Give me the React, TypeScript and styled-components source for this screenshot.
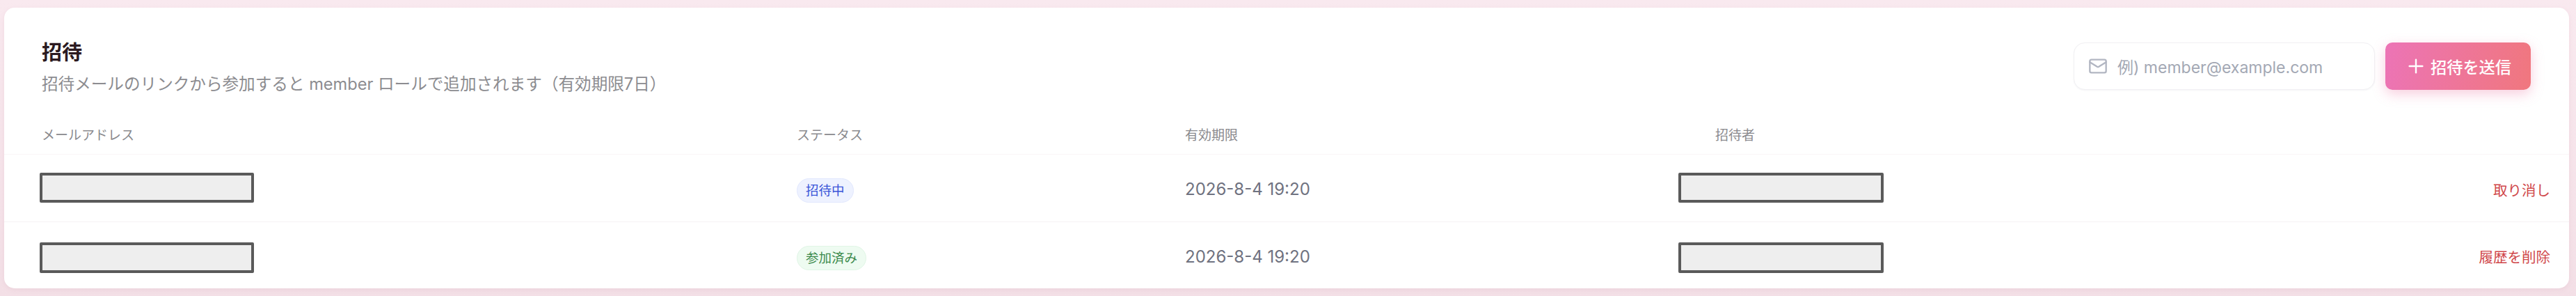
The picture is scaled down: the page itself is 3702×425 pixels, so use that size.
import styled, { createGlobalStyle } from 'styled-components';
import { Mail, Plus } from 'lucide-react';

const GlobalStyle = createGlobalStyle`
    html, body {
        margin: 0;
        padding: 0;
    }
    body {
        width: 3702px;
        height: 425px;
        overflow: hidden;
        background: linear-gradient(180deg, #f9e9ef 0%, #f3dfe6 100%);
        font-family: Inter, "Noto Sans CJK JP", sans-serif;
    }
`;

const Page = styled.div`
    display: flex;
    box-sizing: border-box;
    width: 3702px;
    height: 425px;
    padding: 11px 10px 11px 6px;
`;

const Card = styled.section`
    flex: 1;
    display: flex;
    flex-direction: column;
    background: #ffffff;
    border-radius: 15px;
    box-shadow: 0 2px 6px rgba(190, 120, 150, 0.12);
`;

const Header = styled.header`
    display: flex;
    justify-content: space-between;
    align-items: flex-start;
    height: 152px;
    padding: 49px 55px 0 54px;
    box-sizing: border-box;
`;

const Title = styled.h2`
    margin: 0 0 13px;
    font-size: 29px;
    line-height: 32px;
    font-weight: 700;
    color: #2b1a20;
`;

const Subtitle = styled.p`
    margin: 0;
    font-size: 23.6px;
    line-height: 32px;
    color: #8c8c90;
`;

const InviteForm = styled.div`
    display: flex;
    gap: 15px;
    margin-top: 1px;
`;

const EmailField = styled.div`
    display: flex;
    align-items: center;
    gap: 14px;
    box-sizing: border-box;
    width: 433px;
    height: 68px;
    padding-left: 20px;
    background: #ffffff;
    border: 1.5px solid #f1f0f3;
    border-radius: 16px;
    box-shadow: 0 1px 2px rgba(120, 120, 140, 0.08);
    color: #b2b6c2;
    svg {
        flex-shrink: 0;
    }
`;

const Placeholder = styled.span`
    font-size: 23px;
    color: #a3a8b4;
`;

const SendButton = styled.button`
    display: flex;
    align-items: center;
    justify-content: center;
    gap: 5px;
    width: 209px;
    height: 68px;
    padding: 0;
    border: none;
    border-radius: 10px;
    background: linear-gradient(100deg, #ec74b6 0%, #f0777e 100%);
    box-shadow: 0 6px 18px rgba(236, 116, 160, 0.35);
    color: #ffffff;
    font-family: inherit;
    font-size: 23.2px;
    font-weight: 500;
`;

const columns = '1085px 558px 712px 1fr';

const HeadRow = styled.div`
    display: grid;
    grid-template-columns: ${columns};
    align-items: center;
    height: 58px;
    padding: 0 27px 0 54px;
    border-bottom: 1px solid #faf6f7;
`;

const HeadCell = styled.div<{ $indent?: number }>`
    padding-left: ${(p) => p.$indent || 0}px;
    font-size: 19px;
    color: #8a8a8e;
`;

const Row = styled.div`
    display: grid;
    grid-template-columns: ${columns};
    align-items: center;
    flex: 1;
    padding: 0 27px 0 54px;
    border-bottom: 1px solid #f6f3f4;
    &:last-child {
        border-bottom: none;
    }
`;

const Redacted = styled.div<{ $width: number; $lower?: boolean }>`
    box-sizing: border-box;
    width: ${(p) => p.$width}px;
    height: ${(p) => (p.$lower ? 44 : 43)}px;
    margin-left: -3px;
    margin-top: ${(p) => (p.$lower ? 7 : 0)}px;
    background: #eeeeee;
    border: 4px solid #5a5a5a;
    border-radius: 2px;
`;

const BadgeCell = styled.div`
    margin-top: 8px;
`;

const Badge = styled.span<{ $tone: 'blue' | 'green' }>`
    display: block;
    width: fit-content;
    padding: 0 12px;
    height: 35px;
    line-height: 33px;
    box-sizing: border-box;
    border-radius: 18px;
    font-size: 18.5px;
    background: ${(p) => (p.$tone === 'blue' ? '#eef2ff' : '#eefbf1')};
    border: 1px solid ${(p) => (p.$tone === 'blue' ? '#e2e8fe' : '#e0f6e6')};
    color: ${(p) => (p.$tone === 'blue' ? '#3a55d8' : '#3c8a4c')};
`;

const DateText = styled.span`
    display: block;
    margin-top: 4px;
    font-size: 24px;
    color: #6f7280;
`;

const InviterCell = styled.div`
    display: flex;
    justify-content: space-between;
    align-items: center;
`;

const Action = styled.div`
    margin-top: 4px;
    text-align: right;
    font-size: 20.5px;
    color: #d0474a;
`;

const App = () => {
    return (
        <Page>
            <GlobalStyle />
            <Card>
                <Header>
                    <div>
                        <Title>招待</Title>
                        <Subtitle>招待メールのリンクから参加すると member ロールで追加されます（有効期限7日）</Subtitle>
                    </div>
                    <InviteForm>
                        <EmailField>
                            <Mail size={28} strokeWidth={2} />
                            <Placeholder>例) member@example.com</Placeholder>
                        </EmailField>
                        <SendButton>
                            <Plus size={32} strokeWidth={1.8} />
                            招待を送信
                        </SendButton>
                    </InviteForm>
                </Header>
                <HeadRow>
                    <HeadCell>メールアドレス</HeadCell>
                    <HeadCell>ステータス</HeadCell>
                    <HeadCell>有効期限</HeadCell>
                    <HeadCell $indent={50}>招待者</HeadCell>
                </HeadRow>
                <Row>
                    <Redacted $width={308} />
                    <BadgeCell><Badge $tone="blue">招待中</Badge></BadgeCell>
                    <DateText>2026-8-4 19:20</DateText>
                    <InviterCell>
                        <Redacted $width={295} />
                        <Action>取り消し</Action>
                    </InviterCell>
                </Row>
                <Row>
                    <Redacted $width={308} $lower />
                    <BadgeCell><Badge $tone="green">参加済み</Badge></BadgeCell>
                    <DateText>2026-8-4 19:20</DateText>
                    <InviterCell>
                        <Redacted $width={295} $lower />
                        <Action>履歴を削除</Action>
                    </InviterCell>
                </Row>
            </Card>
        </Page>
    );
};

export default App;
